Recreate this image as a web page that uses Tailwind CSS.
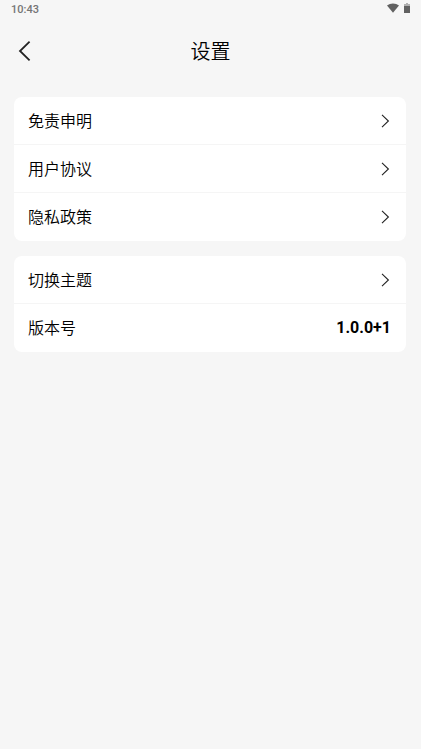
<!DOCTYPE html>
<html lang="zh-CN">
  <head>
    <meta charset="UTF-8" />
    <meta name="viewport" content="width=device-width, initial-scale=1.0" />
    <title>设置</title>
    <script src="https://cdn.jsdelivr.net/npm/@tailwindcss/browser@4"></script>
  </head>
  <body class="bg-[#f6f6f6] text-black min-h-screen font-['Noto_Sans_CJK_SC',sans-serif] font-[350]">
    <!-- Status bar -->
    <div class="h-5 px-[11px] flex items-center justify-between text-[#757575]">
      <span class="font-['Roboto',sans-serif] text-[11px] leading-5 font-medium">10:43</span>
      <div class="flex items-center gap-[5px] pb-1">
        <svg class="w-3 h-[10px]" viewBox="0 0 12 10" fill="#616161"><path d="M0 2.4C3.4-.3 8.6-.3 12 2.4L6 9.8z" /></svg>
        <svg class="w-[6px] h-[10px]" viewBox="0 0 6 10"><path d="M2 0h2v1h2v3H0V1h2z" fill="#b0b0b0" /><path d="M0 3h6v7H0z" fill="#616161" /></svg>
      </div>
    </div>

    <header class="h-[61px] px-3 grid grid-cols-[24px_1fr_24px] items-center">
      <button type="button" aria-label="返回" class="w-6 h-6">
        <svg class="w-6 h-6" viewBox="0 0 24 24" fill="none" stroke="#222" stroke-width="1.8"><path d="M17.6 2.6L8 12l9.6 9.4" /></svg>
      </button>
      <h1 class="text-center text-xl leading-7">设置</h1>
    </header>

    <main class="pl-[14px] pr-[15px] pt-4 space-y-[15px] text-base">
      <nav class="bg-white rounded-lg divide-y divide-[#f5f5f5]">
        <a href="#disclaimer" class="h-12 pl-[14px] pr-[15px] flex items-center justify-between">
          <span class="pb-[2px]">免责申明</span>
          <svg class="w-3 h-4" viewBox="0 0 12 16" fill="none" stroke="#222" stroke-width="1.1"><path d="M3 1.8L9.4 8 3 14.2" /></svg>
        </a>
        <a href="#agreement" class="h-12 pl-[14px] pr-[15px] flex items-center justify-between">
          <span class="pb-[2px]">用户协议</span>
          <svg class="w-3 h-4" viewBox="0 0 12 16" fill="none" stroke="#222" stroke-width="1.1"><path d="M3 1.8L9.4 8 3 14.2" /></svg>
        </a>
        <a href="#privacy" class="h-12 pl-[14px] pr-[15px] flex items-center justify-between">
          <span class="pb-[2px]">隐私政策</span>
          <svg class="w-3 h-4" viewBox="0 0 12 16" fill="none" stroke="#222" stroke-width="1.1"><path d="M3 1.8L9.4 8 3 14.2" /></svg>
        </a>
      </nav>

      <section class="bg-white rounded-lg divide-y divide-[#f5f5f5]">
        <a href="#theme" class="h-12 pl-[14px] pr-[15px] flex items-center justify-between">
          <span class="pb-[2px]">切换主题</span>
          <svg class="w-3 h-4" viewBox="0 0 12 16" fill="none" stroke="#222" stroke-width="1.1"><path d="M3 1.8L9.4 8 3 14.2" /></svg>
        </a>
        <div class="h-12 pl-[14px] pr-[15px] flex items-center justify-between">
          <span class="pb-[2px]">版本号</span>
          <span class="font-['Roboto',sans-serif] font-bold">1.0.0+1</span>
        </div>
      </section>
    </main>
  </body>
</html>
